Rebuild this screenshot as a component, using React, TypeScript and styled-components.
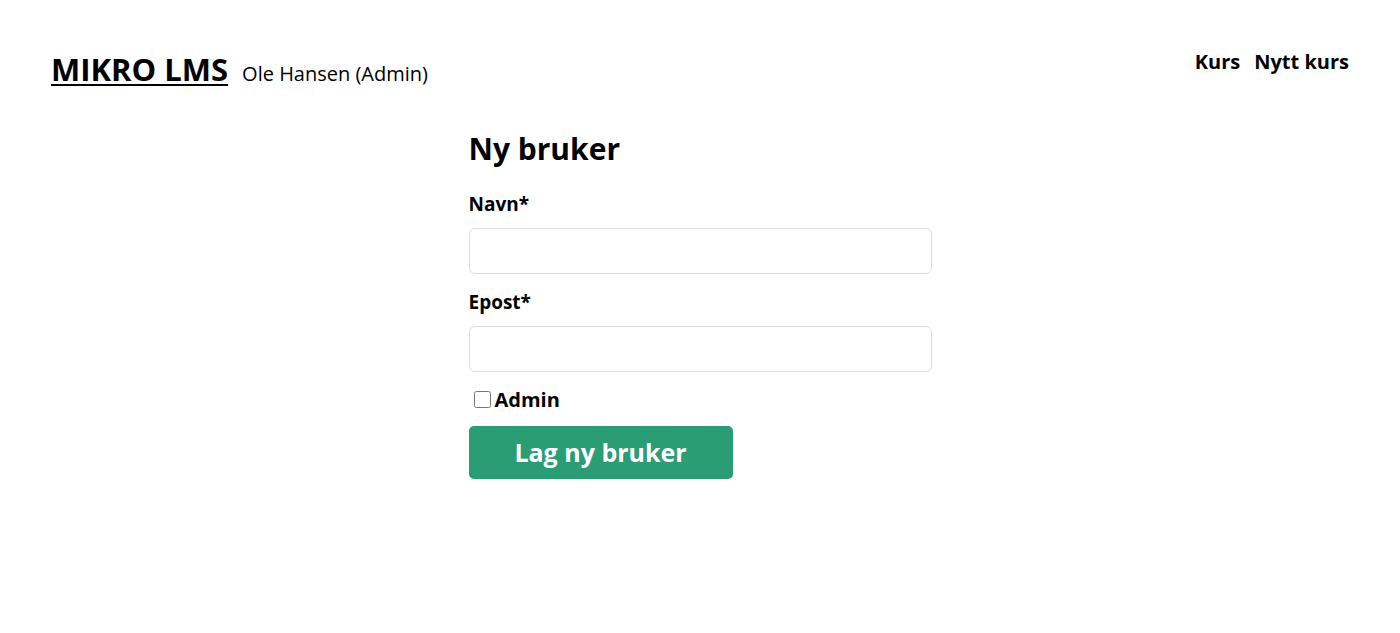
import React from "react";
import styled, { createGlobalStyle } from "styled-components";

const Global = createGlobalStyle`
  html, body { margin: 0; padding: 0; background: #fff; }
  body { font-family: "Open Sans", "Noto Sans", sans-serif; color: #000; }
  * { box-sizing: border-box; }
`;

const Page = styled.div`
  padding: 0 51px;
`;

const Header = styled.header`
  display: flex;
  justify-content: space-between;
  align-items: flex-start;
  padding-top: 44px;
`;

const Brand = styled.div`
  display: flex;
  align-items: baseline;
  gap: 14px;
  padding-top: 7px;
`;

const Logo = styled.a`
  font-size: 31px;
  font-weight: 700;
  color: #000;
  text-decoration: underline;
  text-decoration-thickness: 2px;
  text-underline-offset: 3px;
  line-height: 1.2;
`;

const User = styled.span`
  font-size: 20px;
`;

const Nav = styled.nav`
  display: flex;
  gap: 14px;
  padding-top: 4px;
`;

const NavLink = styled.a`
  font-size: 20px;
  font-weight: 700;
  color: #000;
  text-decoration: none;
`;

const Main = styled.main`
  width: 463px;
  margin: 41px auto 0;
  display: flex;
  flex-direction: column;
`;

const Title = styled.h1`
  font-size: 30px;
  font-weight: 700;
  margin: 0 0 24px;
  line-height: 1.3;
`;

const Label = styled.label`
  font-size: 19px;
  font-weight: 700;
  line-height: 1.3;
  margin-bottom: 11px;
`;

const Input = styled.input`
  width: 100%;
  height: 46px;
  border: 1px solid #ddd;
  border-radius: 6px;
  margin-bottom: 16px;
  font-size: 18px;
  padding: 0 10px;
`;

const CheckRow = styled.label`
  display: flex;
  align-items: center;
  gap: 4px;
  font-size: 20px;
  font-weight: 700;
  line-height: 1.2;
  margin-bottom: 14px;
  padding-left: 5px;
`;

const Check = styled.input`
  width: 17px;
  height: 17px;
  margin: 0;
`;

const Button = styled.button`
  width: 264px;
  height: 53px;
  background: #2a9d74;
  color: #fff;
  border: none;
  border-radius: 5px;
  font-family: inherit;
  font-size: 25px;
  font-weight: 700;
`;

export default function App() {
  return (
    <Page>
      <Global />
      <Header>
        <Brand>
          <Logo href="#">MIKRO LMS</Logo>
          <User>Ole Hansen (Admin)</User>
        </Brand>
        <Nav>
          <NavLink href="#">Kurs</NavLink>
          <NavLink href="#">Nytt kurs</NavLink>
        </Nav>
      </Header>
      <Main>
        <Title>Ny bruker</Title>
        <Label htmlFor="navn">Navn*</Label>
        <Input id="navn" />
        <Label htmlFor="epost">Epost*</Label>
        <Input id="epost" />
        <CheckRow>
          <Check type="checkbox" />
          Admin
        </CheckRow>
        <Button>Lag ny bruker</Button>
      </Main>
    </Page>
  );
}
